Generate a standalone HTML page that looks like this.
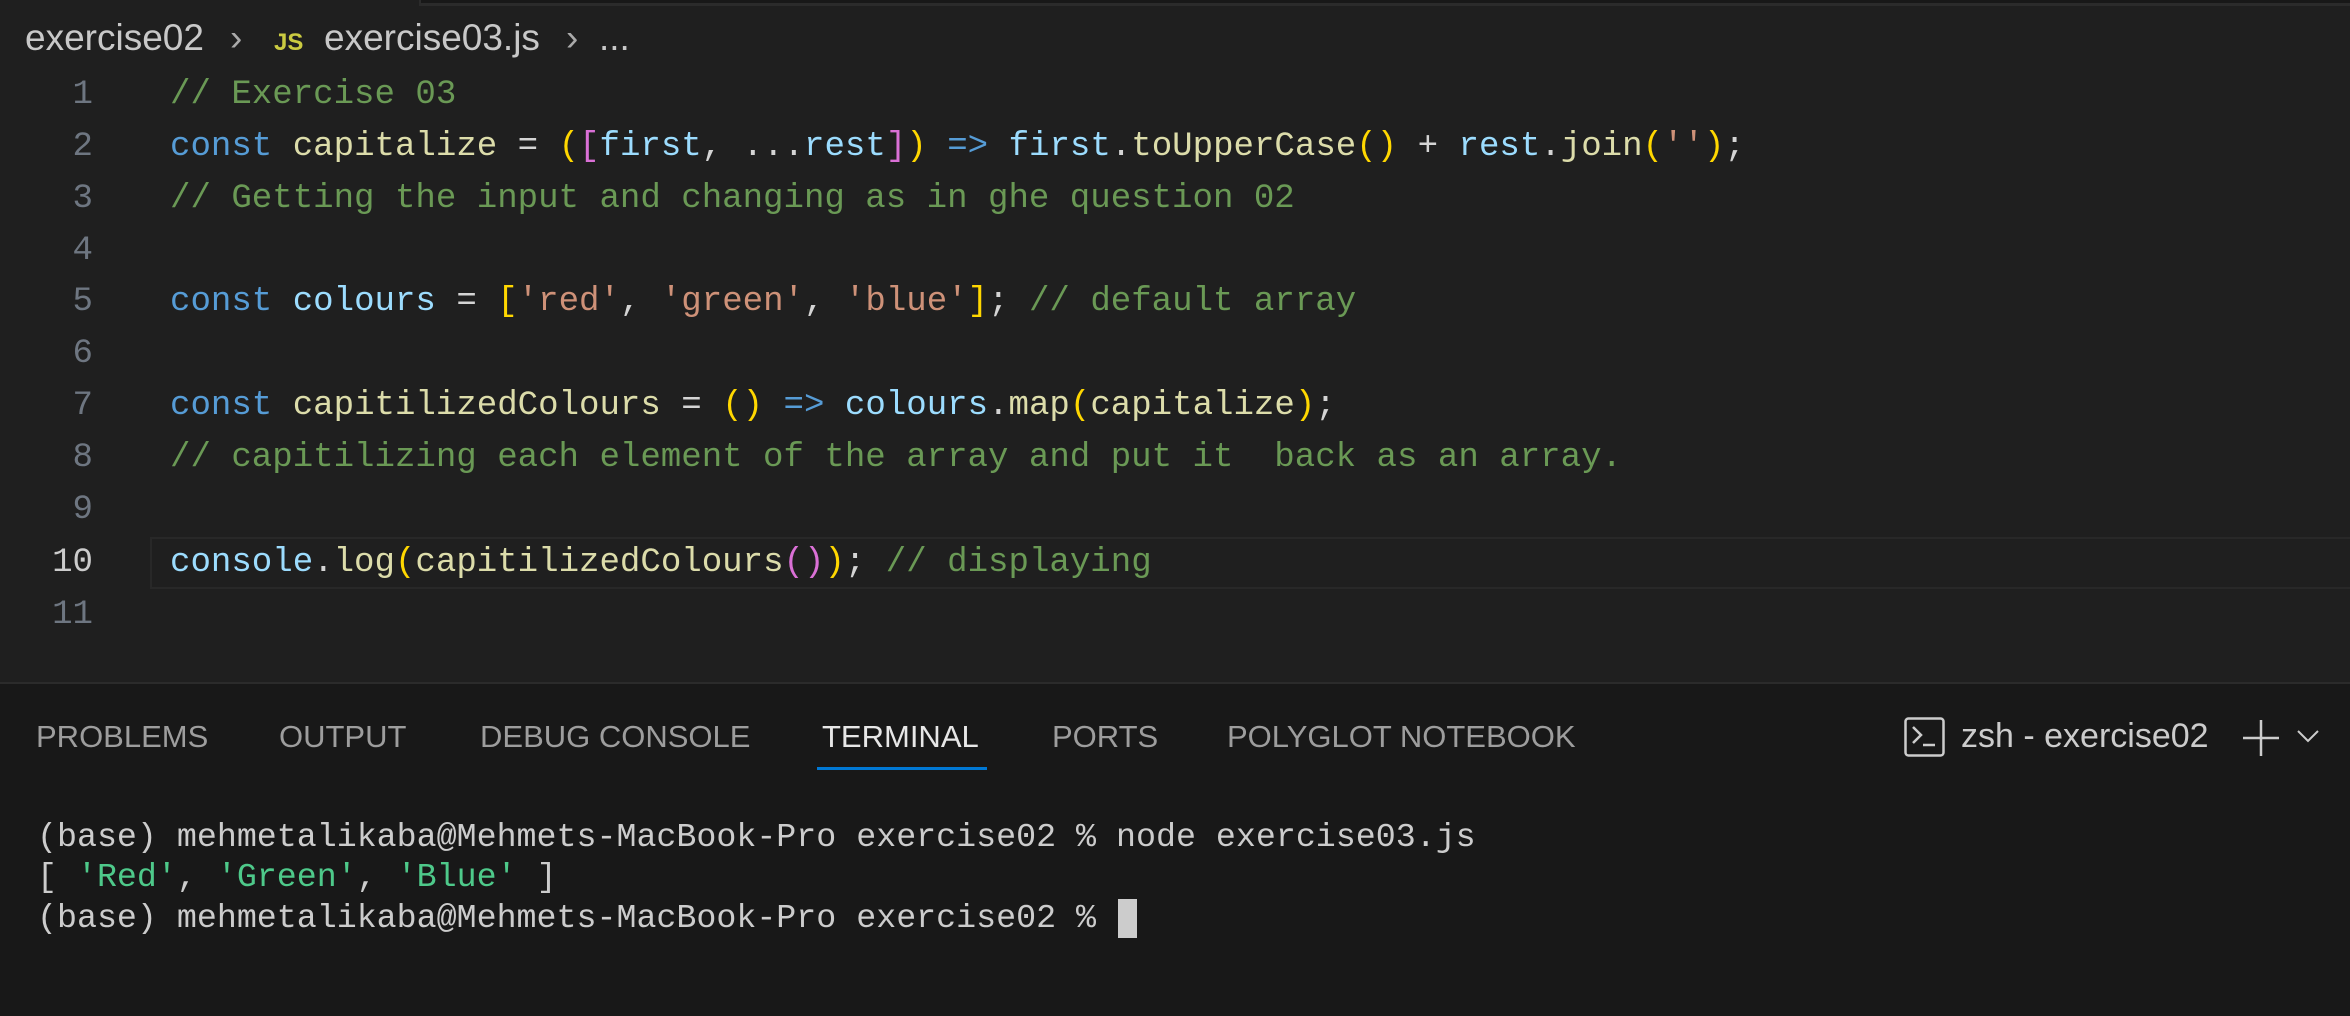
<!DOCTYPE html>
<html><head><meta charset="utf-8"><style>
html,body{margin:0;padding:0;}
body{width:2350px;height:1014px;background:#1f1f1f;position:relative;overflow:hidden;font-family:"Liberation Sans",sans-serif;}
.topbox{position:absolute;left:419px;top:0;width:1931px;height:3px;background:#181818;border-left:2px solid #2b2b2b;border-bottom:3px solid #2b2b2b;}
.bc{position:absolute;top:17px;left:25px;font-size:37px;color:#c8c8c8;white-space:nowrap;line-height:42px;}
.bc span{position:absolute;top:0;}
.code{position:absolute;left:0;top:2px;font-family:"Liberation Mono",monospace;font-size:34.1px;}
.ln{position:absolute;left:0;width:93px;text-align:right;color:#6e7681;height:52px;line-height:52px;}
.cl{position:absolute;left:170px;white-space:pre;height:52px;line-height:52px;color:#d4d4d4;}
.cur{position:absolute;left:150px;right:0;top:537px;height:48px;border:2px solid #282828;border-right:none;}
.c{color:#6a9955}.k{color:#569cd6}.f{color:#dcdcaa}.v{color:#9cdcfe}.s{color:#ce9178}.y{color:#ffd700}.p{color:#da70d6}.w{color:#d4d4d4}
.panel{position:absolute;left:0;top:682px;width:2350px;height:332px;background:#181818;border-top:2px solid #2b2b2b;}
.tab{position:absolute;top:35px;font-size:31px;color:#9d9d9d;line-height:36px;}
.term{position:absolute;left:37px;font-family:"Liberation Mono",monospace;font-size:33.3px;color:#cccccc;white-space:pre;line-height:40px;}
</style></head><body>
<div class="topbox"></div>
<div class="bc">
<span style="left:0">exercise02</span>
<span style="left:205px;color:#aaa">&#x203A;</span>
<span style="left:249px;top:5px;color:#cbcb41;font-weight:bold;font-size:24px">JS</span>
<span style="left:299px">exercise03.js</span>
<span style="left:541px;color:#aaa">&#x203A;</span>
<span style="left:574px">...</span>
</div>
<div class="cur"></div>
<div class="code">
<div class="ln" style="top:67px">1</div>
<div class="ln" style="top:119px">2</div>
<div class="ln" style="top:171px">3</div>
<div class="ln" style="top:223px">4</div>
<div class="ln" style="top:274px">5</div>
<div class="ln" style="top:326px">6</div>
<div class="ln" style="top:378px">7</div>
<div class="ln" style="top:430px">8</div>
<div class="ln" style="top:482px">9</div>
<div class="ln" style="top:535px;color:#cccccc">10</div>
<div class="ln" style="top:587px">11</div>
<div class="cl" style="top:67px"><span class="c">// Exercise 03</span></div>
<div class="cl" style="top:119px"><span class="k">const</span> <span class="f">capitalize</span> = <span class="y">(</span><span class="p">[</span><span class="v">first</span>, ...<span class="v">rest</span><span class="p">]</span><span class="y">)</span> <span class="k">=&gt;</span> <span class="v">first</span>.<span class="f">toUpperCase</span><span class="y">()</span> + <span class="v">rest</span>.<span class="f">join</span><span class="y">(</span><span class="s">''</span><span class="y">)</span>;</div>
<div class="cl" style="top:171px"><span class="c">// Getting the input and changing as in ghe question 02</span></div>
<div class="cl" style="top:274px"><span class="k">const</span> <span class="v">colours</span> = <span class="y">[</span><span class="s">'red'</span>, <span class="s">'green'</span>, <span class="s">'blue'</span><span class="y">]</span>; <span class="c">// default array</span></div>
<div class="cl" style="top:378px"><span class="k">const</span> <span class="f">capitilizedColours</span> = <span class="y">()</span> <span class="k">=&gt;</span> <span class="v">colours</span>.<span class="f">map</span><span class="y">(</span><span class="f">capitalize</span><span class="y">)</span>;</div>
<div class="cl" style="top:430px"><span class="c">// capitilizing each element of the array and put it  back as an array.</span></div>
<div class="cl" style="top:535px"><span class="v">console</span>.<span class="f">log</span><span class="y">(</span><span class="f">capitilizedColours</span><span class="p">()</span><span class="y">)</span>; <span class="c">// displaying</span></div>
</div>
<div class="panel">
<div class="tab" style="left:36px">PROBLEMS</div>
<div class="tab" style="left:279px">OUTPUT</div>
<div class="tab" style="left:480px">DEBUG CONSOLE</div>
<div class="tab" style="left:822px;color:#e7e7e7">TERMINAL</div>
<div style="position:absolute;left:817px;top:83px;width:170px;height:3px;background:#0078d4"></div>
<div class="tab" style="left:1052px">PORTS</div>
<div class="tab" style="left:1227px">POLYGLOT NOTEBOOK</div>
<svg style="position:absolute;left:1904px;top:33px" width="42" height="40" viewBox="0 0 42 40"><rect x="1.5" y="1.5" width="38" height="37" rx="3" fill="none" stroke="#ccc" stroke-width="2.5"/><path d="M9 10 L17 18 L9 26" fill="none" stroke="#ccc" stroke-width="2.5"/><path d="M19 28 H31" stroke="#ccc" stroke-width="2.5"/></svg>
<div class="tab" style="left:1961px;color:#ccc;font-size:34px;top:34px">zsh - exercise02</div>
<svg style="position:absolute;left:2241px;top:34px" width="40" height="40"><path d="M20 2V38M2 20H38" stroke="#ccc" stroke-width="2.5"/></svg>
<svg style="position:absolute;left:2297px;top:45px" width="22" height="14"><path d="M1 2L11 12L21 2" fill="none" stroke="#ccc" stroke-width="2"/></svg>
<div class="term" style="top:133px">(base) mehmetalikaba@Mehmets-MacBook-Pro exercise02 % node exercise03.js</div>
<div class="term" style="top:173px">[ <span style="color:#4ec98a">'Red'</span>, <span style="color:#4ec98a">'Green'</span>, <span style="color:#4ec98a">'Blue'</span> ]</div>
<div class="term" style="top:214px">(base) mehmetalikaba@Mehmets-MacBook-Pro exercise02 % </div>
<div style="position:absolute;left:1118px;top:215px;width:19px;height:39px;background:#cccccc"></div>
</div>
</body></html>
